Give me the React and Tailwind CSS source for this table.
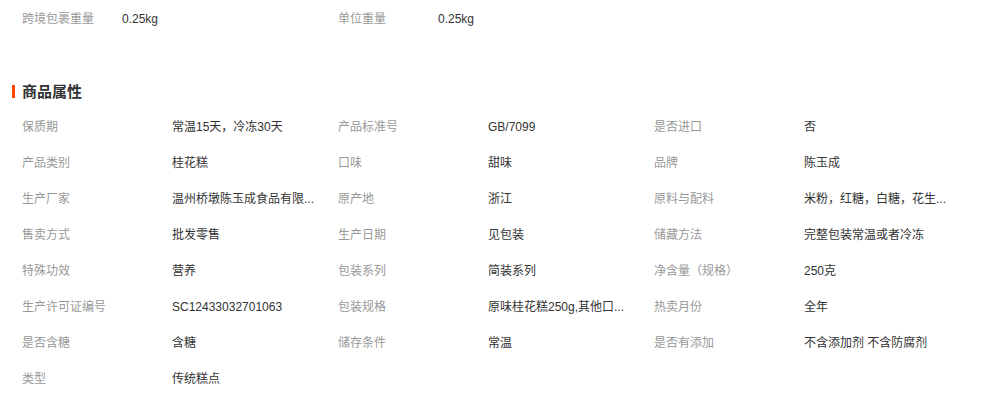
import React from 'react';

const attrs = [
  ['保质期', '常温15天，冷冻30天'],
  ['产品标准号', 'GB/7099'],
  ['是否进口', '否'],
  ['产品类别', '桂花糕'],
  ['口味', '甜味'],
  ['品牌', '陈玉成'],
  ['生产厂家', '温州桥墩陈玉成食品有限...'],
  ['原产地', '浙江'],
  ['原料与配料', '米粉，红糖，白糖，花生...'],
  ['售卖方式', '批发零售'],
  ['生产日期', '见包装'],
  ['储藏方法', '完整包装常温或者冷冻'],
  ['特殊功效', '营养'],
  ['包装系列', '简装系列'],
  ['净含量（规格）', '250克'],
  ['生产许可证编号', 'SC12433032701063'],
  ['包装规格', '原味桂花糕250g,其他口...'],
  ['热卖月份', '全年'],
  ['是否含糖', '含糖'],
  ['储存条件', '常温'],
  ['是否有添加', '不含添加剂 不含防腐剂'],
  ['类型', '传统糕点'],
];

const font = { fontFamily: '"Liberation Sans", "Noto Sans CJK SC", sans-serif' };

export default function App() {
  return (
    <div className="w-[981px] h-[395px] bg-white text-xs pl-[22px] overflow-hidden" style={font}>
      <div className="mt-[1px] grid grid-cols-[316px_316px] h-9">
        <div className="flex items-center">
          <span className="w-[100px] text-[#999]">跨境包裹重量</span>
          <span className="text-[#333]">0.25kg</span>
        </div>
        <div className="flex items-center">
          <span className="w-[100px] text-[#999]">单位重量</span>
          <span className="text-[#333]">0.25kg</span>
        </div>
      </div>

      <div className="relative mt-[44px] mb-[6px] h-[22px] flex items-center">
        <span className="absolute -left-[10px] top-[4px] w-[3px] h-[13px] bg-[#ff4400]" />
        <h3 className="text-[15px] font-bold text-[#333]">商品属性</h3>
      </div>

      <div className="grid grid-cols-[316px_316px_316px]">
        {attrs.map(([label, value]) => (
          <div key={label} className="flex items-center h-9">
            <span className="w-[150px] shrink-0 text-[#999]">{label}</span>
            <span className="whitespace-nowrap text-[#333]">{value}</span>
          </div>
        ))}
      </div>
    </div>
  );
}
